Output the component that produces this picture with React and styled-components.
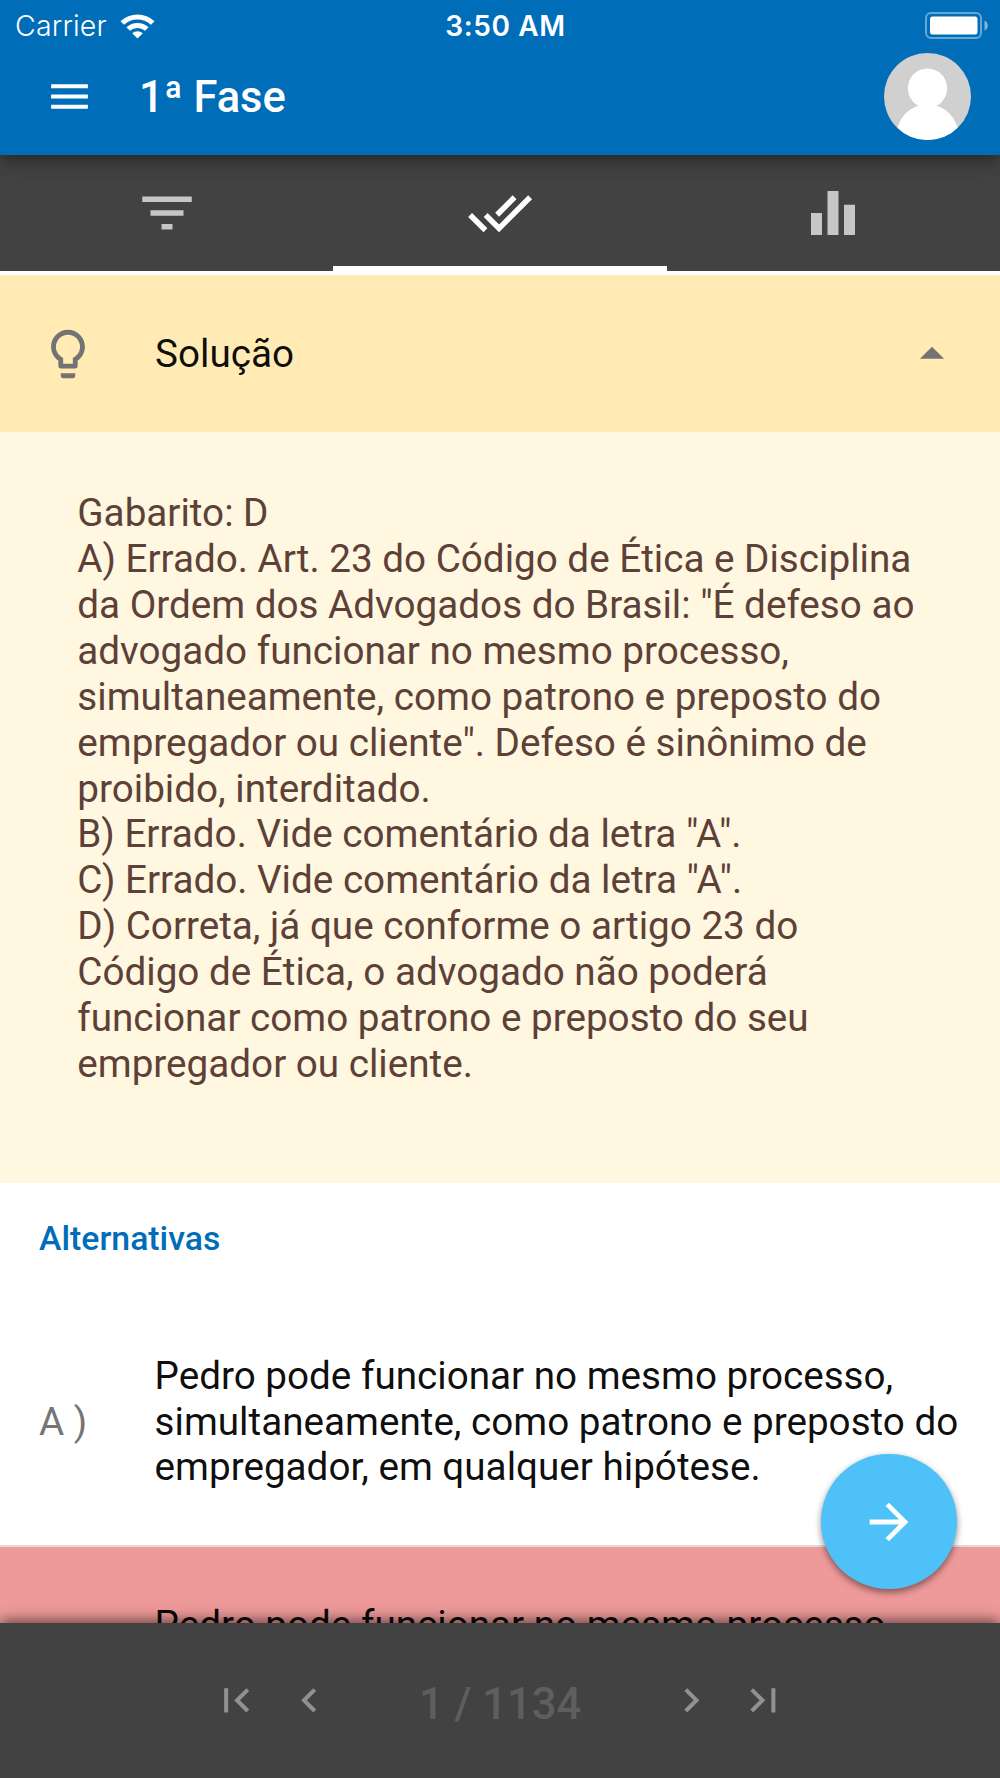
import React from 'react';
import styled, { createGlobalStyle } from 'styled-components';
import {
    MdMenu,
    MdFilterList,
    MdDoneAll,
    MdEqualizer,
    MdLightbulbOutline,
    MdArrowDropUp,
    MdArrowForward,
    MdFirstPage,
    MdChevronLeft,
    MdChevronRight,
    MdLastPage
} from 'react-icons/md';

const GlobalStyle = createGlobalStyle`
    * {
        box-sizing: border-box;
    }
    body {
        margin: 0;
        font-family: Roboto, 'Liberation Sans', sans-serif;
        font-size: 38.65px;
        line-height: 45.9px;
        color: rgba(0, 0, 0, 0.95);
    }
    svg {
        display: block;
        flex: none;
    }
`

const Screen = styled.div`
    position: relative;
    display: flex;
    flex-direction: column;
    width: 1000px;
    height: 1778px;
    background-color: #fff;
    overflow: hidden;
`

const Header = styled.header`
    position: relative;
    z-index: 2;
    height: 154.6px;
    flex: none;
    background-color: #006db9;
    color: #fff;
    box-shadow: 0 4.8px 9.7px -2.4px rgba(0, 0, 0, 0.2),
        0 9.7px 12px 0 rgba(0, 0, 0, 0.14),
        0 2.4px 24px 0 rgba(0, 0, 0, 0.12);
`

const StatusBar = styled.div`
    display: grid;
    grid-template-columns: 1fr auto 1fr;
    align-items: center;
    height: 50px;
    padding: 0 12px 0 15px;
    font-family: Inter, sans-serif;
    font-size: 28.5px;
    line-height: 50px;
`

const Carrier = styled.div`
    display: flex;
    align-items: center;
    gap: 13px;
    padding-top: 1px;
    font-weight: 300;
    letter-spacing: 0.15px;
`

const Clock = styled.div`
    padding: 1px 0 0 8px;
    font-size: 28px;
    font-weight: 600;
    letter-spacing: 0.6px;
`

const Battery = styled.svg`
    justify-self: end;
`

const Toolbar = styled.div`
    display: flex;
    align-items: center;
    height: 93px;
    padding: 0 29px 0 45px;
`

const Title = styled.h1`
    flex: 1;
    margin: 0 0 0 45px;
    padding-top: 2px;
    font-size: 43.5px;
    font-weight: 500;
    letter-spacing: -0.1px;
`

const Tabs = styled.nav`
    display: grid;
    grid-template-columns: repeat(3, 1fr);
    flex: none;
    height: 116.4px;
    background-color: #424242;
`

const Tab = styled.div`
    display: flex;
    align-items: center;
    justify-content: center;
    font-size: 66px;
    color: ${props => (props.$active ? '#fff' : '#c6c6c6')};
    border-bottom: 5px solid ${props => (props.$active ? '#fff' : 'transparent')};
    padding-top: 5px;
`

const Content = styled.main`
    flex: 1;
    min-height: 0;
    padding-top: 4px;
    overflow: hidden;
`

const SolutionHead = styled.div`
    display: flex;
    align-items: center;
    height: 156.6px;
    padding: 1px 39px 0;
    background-color: #ffebb3;

    & svg {
        font-size: 58px;
        color: #737373;
    }
`

const SolutionTitle = styled.div`
    flex: 1;
    margin-left: 58px;
`

const SolutionText = styled.div`
    height: 751.4px;
    padding: 58.5px 77.3px 0;
    background-color: #fff7e0;
    color: #5d4037;
    white-space: pre-line;
`

const Subheader = styled.div`
    height: 114px;
    padding-left: 39px;
    font-size: 33.8px;
    font-weight: 500;
    line-height: 112.6px;
    color: #006db9;
`

const Alternative = styled.div`
    display: flex;
    align-items: center;
    min-height: 249.6px;
    padding: 1.5px 38px 0 39px;
    background-color: ${props => (props.$wrong ? '#ef9a9a' : '#fff')};
    border-bottom: 2.4px solid #dcdcdc;

    ${props => props.$wrong && `
        align-items: flex-start;
        padding-top: 55.5px;
    `}
`

const Letter = styled.div`
    width: 115.6px;
    flex: none;
    color: #757575;
`

const Fab = styled.button`
    position: absolute;
    right: 43.5px;
    bottom: 188.7px;
    z-index: 1;
    display: flex;
    align-items: center;
    justify-content: center;
    width: 135.3px;
    height: 135.3px;
    padding: 0;
    border: 0;
    border-radius: 50%;
    background-color: #4fc1f9;
    color: #fff;
    font-size: 58px;
    box-shadow: 0 4px 7px rgba(0, 0, 0, 0.36), 0 1px 6px rgba(0, 0, 0, 0.12);
`

const Footer = styled.footer`
    position: relative;
    display: flex;
    align-items: center;
    justify-content: space-between;
    flex: none;
    height: 155px;
    padding: 0 200px;
    background-color: #424242;
    box-shadow: 0 -4.8px 9.7px -2.4px rgba(0, 0, 0, 0.3),
        0 -4.8px 12px 0 rgba(0, 0, 0, 0.2),
        0 -2.4px 20px 0 rgba(0, 0, 0, 0.12);
`

const PagerGroup = styled.div`
    display: flex;
`

const PagerButton = styled.div`
    display: flex;
    justify-content: center;
    width: 72.7px;
    font-size: 48.5px;
    color: #919191;
`

const PageCount = styled.div`
    padding-top: 8px;
    font-size: 43.5px;
    font-weight: 500;
    color: #5e5e5e;
`

const WifiIcon = () => (
    <svg width="35" height="25" viewBox="0 0 35 25" fill="#fff">
        <path d="M0.5 7.2 A25 25 0 0 1 34.5 7.2 L31 10.8 A20 20 0 0 0 4 10.8Z" />
        <path d="M6.4 13.2 A16.5 16.5 0 0 1 28.6 13.2 L25 16.8 A11.5 11.5 0 0 0 10 16.8Z" />
        <path d="M12.2 19.2 A8.5 8.5 0 0 1 22.8 19.2 L17.5 24.5Z" />
    </svg>
)

const BatteryIcon = () => (
    <Battery width="63" height="27" viewBox="0 0 63 27">
        <rect x="1" y="1" width="55" height="25" rx="5" fill="none" stroke="#fff" strokeOpacity="0.4" strokeWidth="2" />
        <rect x="5" y="4.5" width="47.5" height="18" rx="2.5" fill="#fff" />
        <path d="M59.5 8.5 Q62.8 10 62.8 13.5 Q62.8 17 59.5 18.5Z" fill="#fff" fillOpacity="0.5" />
    </Battery>
)

const Avatar = () => (
    <svg width="87" height="87" viewBox="0 0 87 87">
        <clipPath id="avatar">
            <circle cx="43.5" cy="43.5" r="43.5" />
        </clipPath>
        <g clipPath="url(#avatar)">
            <rect width="87" height="87" fill="#d0d0d0" />
            <circle cx="43.5" cy="35.3" r="19.7" fill="#fff" />
            <circle cx="43.5" cy="82.5" r="31" fill="#fff" />
        </g>
    </svg>
)

const solution = `Gabarito: D
A) Errado. Art. 23 do Código de Ética e Disciplina da Ordem dos Advogados do Brasil: "É defeso ao advogado funcionar no mesmo processo, simultaneamente, como patrono e preposto do empregador ou cliente". Defeso é sinônimo de proibido, interditado.
B) Errado. Vide comentário da letra "A".
C) Errado. Vide comentário da letra "A".
D) Correta, já que conforme o artigo 23 do Código de Ética, o advogado não poderá funcionar como patrono e preposto do seu empregador ou cliente.`

const App = () => (
    <Screen>
        <GlobalStyle />
        <Header>
            <StatusBar>
                <Carrier>
                    Carrier
                    <WifiIcon />
                </Carrier>
                <Clock>3:50 AM</Clock>
                <BatteryIcon />
            </StatusBar>
            <Toolbar>
                <MdMenu size={49} />
                <Title>1ª Fase</Title>
                <Avatar />
            </Toolbar>
        </Header>
        <Tabs>
            <Tab><MdFilterList /></Tab>
            <Tab $active><MdDoneAll /></Tab>
            <Tab><MdEqualizer /></Tab>
        </Tabs>
        <Content>
            <SolutionHead>
                <MdLightbulbOutline />
                <SolutionTitle>Solução</SolutionTitle>
                <MdArrowDropUp />
            </SolutionHead>
            <SolutionText>{solution}</SolutionText>
            <Subheader>Alternativas</Subheader>
            <Alternative>
                <Letter>A )</Letter>
                <div>Pedro pode funcionar no mesmo processo, simultaneamente, como patrono e preposto do empregador, em qualquer hipótese.</div>
            </Alternative>
            <Alternative $wrong>
                <Letter />
                <div>Pedro pode funcionar no mesmo processo,</div>
            </Alternative>
        </Content>
        <Fab><MdArrowForward /></Fab>
        <Footer>
            <PagerGroup>
                <PagerButton><MdFirstPage /></PagerButton>
                <PagerButton><MdChevronLeft /></PagerButton>
            </PagerGroup>
            <PageCount>1 / 1134</PageCount>
            <PagerGroup>
                <PagerButton><MdChevronRight /></PagerButton>
                <PagerButton><MdLastPage /></PagerButton>
            </PagerGroup>
        </Footer>
    </Screen>
)

export default App
